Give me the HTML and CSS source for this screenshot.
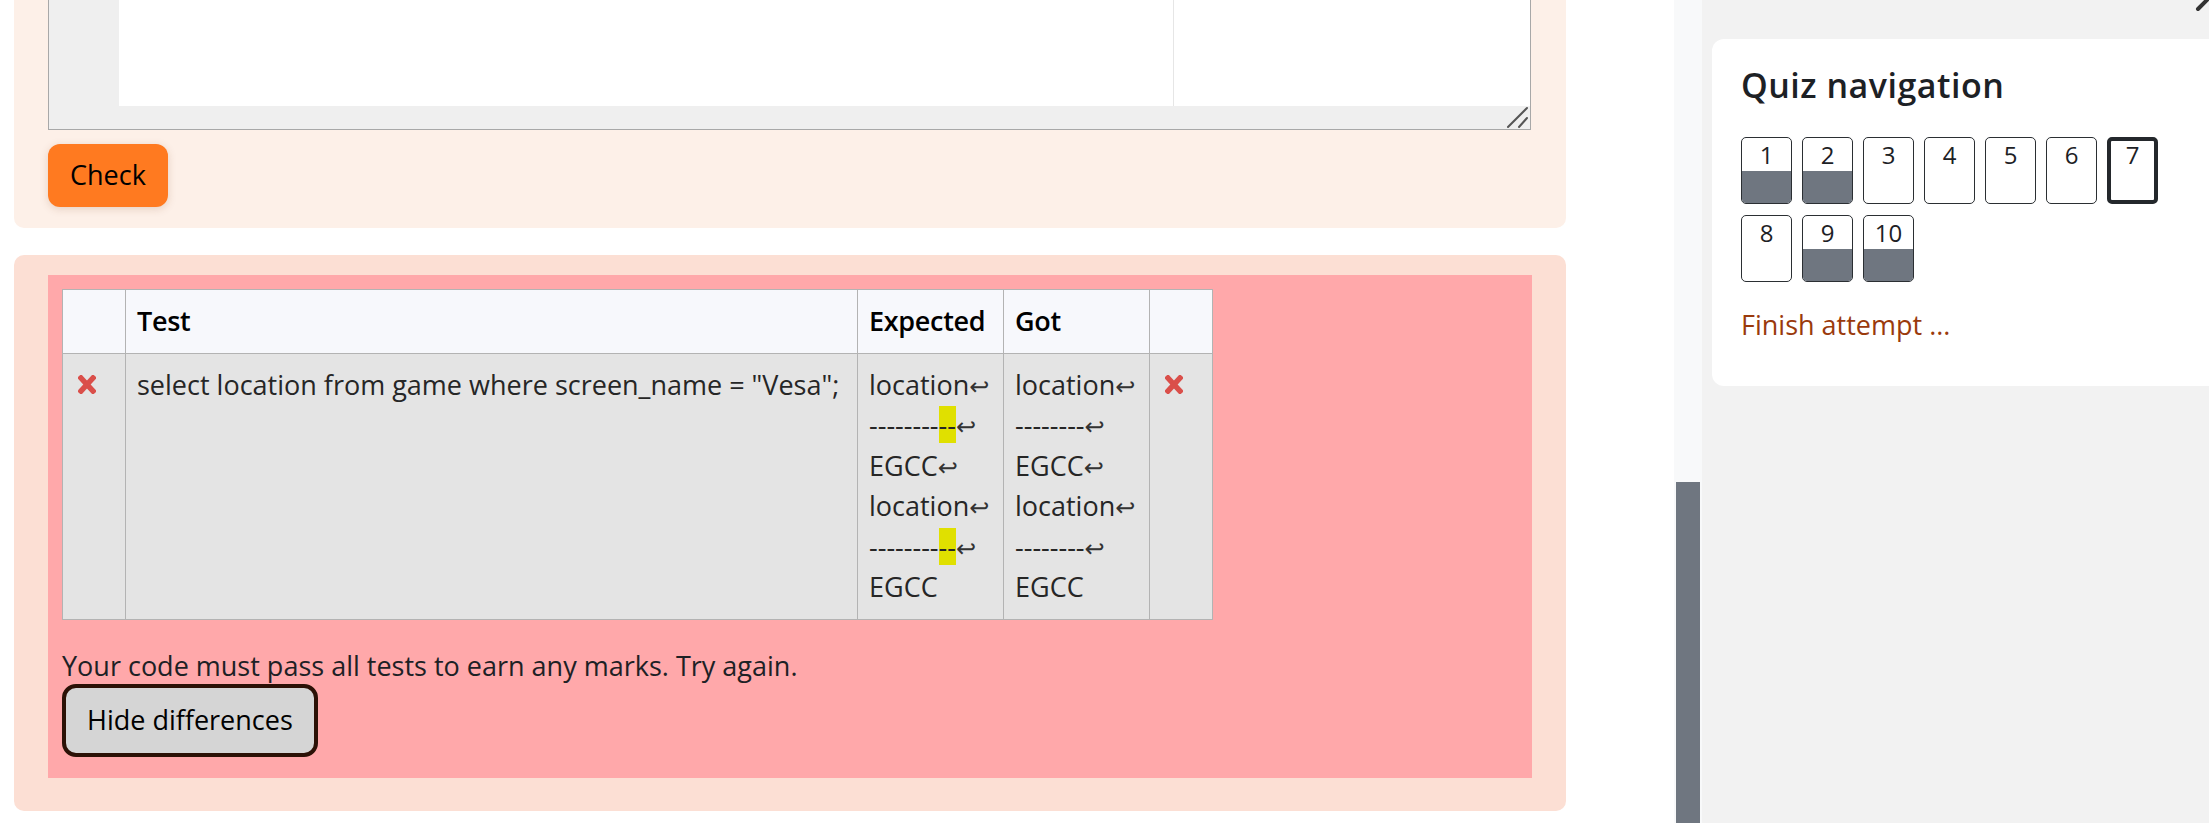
FILE: index.html
```html
<!DOCTYPE html>
<html lang="en">
<head>
<meta charset="utf-8">
<title>Quiz attempt</title>
<link rel="stylesheet" href="styles.css">
</head>
<body>
<div class="page">
  <main class="main">
    <section class="card formulation">
      <div class="editor">
        <div class="editor-body">
          <div class="gutter"></div>
          <div class="code"><div class="print-margin"></div></div>
        </div>
        <div class="editor-bar">
          <svg class="resize" width="24" height="23" viewBox="0 0 24 23" aria-hidden="true">
            <line x1="2" y1="21" x2="21" y2="2" stroke="#555" stroke-width="2" stroke-linecap="round"/>
            <line x1="13" y1="21" x2="21" y2="12" stroke="#555" stroke-width="2" stroke-linecap="round"/>
          </svg>
        </div>
      </div>
      <button class="btn-check" type="button">Check</button>
    </section>

    <section class="card outcome">
      <div class="feedback">
        <table class="results">
          <colgroup>
            <col class="c-icon"><col class="c-test"><col class="c-exp"><col class="c-got"><col class="c-icon">
          </colgroup>
          <thead>
            <tr><th></th><th>Test</th><th>Expected</th><th>Got</th><th></th></tr>
          </thead>
          <tbody>
            <tr>
              <td class="mark"><svg class="cross" width="18" height="19" viewBox="0 0 18 19" aria-hidden="true"><line x1="3" y1="3" x2="15" y2="16"/><line x1="15" y1="3" x2="3" y2="16"/></svg></td>
              <td>select location from game where screen_name = "Vesa";</td>
              <td class="out">location<span class="nl">↩</span><br>--------<span class="hl">--</span><span class="nl">↩</span><br>EGCC<span class="nl">↩</span><br>location<span class="nl">↩</span><br>--------<span class="hl">--</span><span class="nl">↩</span><br>EGCC</td>
              <td class="out">location<span class="nl">↩</span><br>--------<span class="nl">↩</span><br>EGCC<span class="nl">↩</span><br>location<span class="nl">↩</span><br>--------<span class="nl">↩</span><br>EGCC</td>
              <td class="mark"><svg class="cross" width="18" height="19" viewBox="0 0 18 19" aria-hidden="true"><line x1="3" y1="3" x2="15" y2="16"/><line x1="15" y1="3" x2="3" y2="16"/></svg></td>
            </tr>
          </tbody>
        </table>
        <p class="summary">Your code must pass all tests to earn any marks. Try again.</p>
        <button class="btn-diff" type="button">Hide differences</button>
      </div>
    </section>
  </main>

  <div class="scrollbar"><div class="thumb"></div></div>

  <aside class="drawer">
    <svg class="drawer-close" width="14" height="12" viewBox="0 0 14 12" aria-hidden="true">
      <line x1="3" y1="9" x2="15" y2="-3" stroke="#333" stroke-width="4" stroke-linecap="round"/>
    </svg>
    <div class="nav-card">
      <h3 class="nav-title">Quiz navigation</h3>
      <div class="qn-grid">
        <a class="qn answered"><span class="qn-num">1</span><span class="qn-fill"></span></a>
        <a class="qn answered"><span class="qn-num">2</span><span class="qn-fill"></span></a>
        <a class="qn"><span class="qn-num">3</span><span class="qn-fill"></span></a>
        <a class="qn"><span class="qn-num">4</span><span class="qn-fill"></span></a>
        <a class="qn"><span class="qn-num">5</span><span class="qn-fill"></span></a>
        <a class="qn"><span class="qn-num">6</span><span class="qn-fill"></span></a>
        <a class="qn current"><span class="qn-num">7</span><span class="qn-fill"></span></a>
        <a class="qn"><span class="qn-num">8</span><span class="qn-fill"></span></a>
        <a class="qn answered"><span class="qn-num">9</span><span class="qn-fill"></span></a>
        <a class="qn answered"><span class="qn-num">10</span><span class="qn-fill"></span></a>
      </div>
      <a class="finish">Finish attempt ...</a>
    </div>
  </aside>
</div>
</body>
</html>
```

FILE: styles.css
```css
html, body {
  margin: 0;
  padding: 0;
  background: #ffffff;
}

body {
  font-family: "Open Sans", "Noto Sans", "Liberation Sans", sans-serif;
  font-size: 27px;
  line-height: 40.5px;
  color: #1d2125;
}

.page {
  display: flex;
  height: 823px;
  overflow: hidden;
  position: relative;
}

/* ---------- main column ---------- */
.main {
  flex: none;
  width: 1674px;
  box-sizing: border-box;
  padding: 0 108px 0 14px;
}

.card {
  border-radius: 10px;
}

.formulation {
  margin-top: -100px;
  background: #fdf0e8;
  padding: 20px 35px 21px 34px;
}

.editor {
  height: 210px;
  box-sizing: border-box;
  border: 1px solid #a8a8a8;
  display: flex;
  flex-direction: column;
  background: #ffffff;
}

.editor-body {
  height: 185px;
  display: flex;
}

.gutter {
  width: 70px;
  background: #efefef;
}

.code {
  flex: 1;
  position: relative;
  background: #ffffff;
}

.print-margin {
  width: 1055px;
  height: 100%;
  box-sizing: border-box;
  border-right: 1px solid #e6e6e6;
}

.editor-bar {
  height: 23px;
  background: #efefef;
  display: flex;
  justify-content: flex-end;
  align-items: flex-end;
}

.resize {
  display: block;
}

.btn-check {
  margin-top: 14px;
  display: block;
  height: 63px;
  padding: 0 22px;
  border: 0;
  border-radius: 12px;
  background: #ff7a20;
  color: #000;
  font-family: inherit;
  font-size: 27px;
  line-height: 40.5px;
  box-shadow: 0 2px 8px rgba(120, 60, 20, 0.18);
}

.outcome {
  margin-top: 27px;
  background: #fcdfd4;
  padding: 20px 34px 33px 34px;
}

.feedback {
  background: #ffa8aa;
  padding: 14px 14px 21px 14px;
}

/* ---------- results table ---------- */
.results {
  border-collapse: collapse;
  table-layout: fixed;
  width: 1150px;
  background: #e4e4e4;
}

.c-icon { width: 63px; }
.c-test { width: 732px; }
.c-exp { width: 146px; }
.c-got { width: 146px; }

.results th,
.results td {
  border: 1px solid #b3b3b3;
  padding: 11px 11px;
  text-align: left;
  vertical-align: top;
  white-space: nowrap;
}

.results th {
  background: #f7f8fc;
  color: #000;
  font-weight: 600;
  letter-spacing: -0.3px;
}

.results td {
  color: #262626;
}

.results td.mark {
  padding-left: 15px;
}

.cross {
  display: block;
  margin-top: 10px;
  stroke: #da4f4a;
  stroke-width: 5.5px;
  stroke-linecap: square;
}

.nl {
  font-family: "DejaVu Sans", sans-serif;
  font-size: 24px;
  line-height: 0;
  color: #333;
}

.hl {
  background: #e0e000;
}

.summary {
  margin: 26px 0 0;
  color: #1d2125;
}

.btn-diff {
  display: block;
  box-sizing: border-box;
  height: 73px;
  margin-top: -2px;
  padding: 0 21px;
  border: 4px solid #2c1106;
  border-radius: 14px;
  background: #d5d5d5;
  color: #000;
  font-family: inherit;
  font-size: 27px;
  line-height: 40.5px;
}

/* ---------- scrollbar ---------- */
.scrollbar {
  flex: none;
  width: 28px;
  background: #f8f9fa;
  display: flex;
  flex-direction: column;
  justify-content: flex-end;
  padding: 0 2px;
  box-sizing: border-box;
}

.thumb {
  height: 341px;
  background: #6f7680;
}

/* ---------- drawer ---------- */
.drawer {
  flex: 1;
  background: #f2f2f2;
  padding: 39px 0 0 10px;
  position: relative;
}

.drawer-close {
  position: absolute;
  top: 0;
  right: 0;
}

.nav-card {
  background: #ffffff;
  border-radius: 12px;
  margin-right: -20px;
  padding: 26px 29px 41px 29px;
}

.nav-title {
  margin: 0 0 31px;
  font-size: 34px;
  line-height: 40.8px;
  font-weight: 600;
  letter-spacing: 0.5px;
  color: #1d2125;
}

.qn-grid {
  display: grid;
  grid-template-columns: repeat(7, 51px);
  grid-auto-rows: 67px;
  column-gap: 10px;
  row-gap: 11px;
}

.qn {
  box-sizing: border-box;
  border: 1px solid #2b2f33;
  border-radius: 5px;
  overflow: hidden;
  display: flex;
  flex-direction: column;
  background: #ffffff;
}

.qn-num {
  height: 33px;
  flex: none;
  text-align: center;
  font-size: 24px;
  line-height: 33px;
  color: #1d2125;
}

.qn-fill {
  flex: 1;
}

.qn.answered .qn-fill {
  background: #6f7680;
}

.qn.current {
  border: 4px solid #24282c;
}

.qn.current .qn-num {
  height: 30px;
  line-height: 27px;
}

.finish {
  display: block;
  margin-top: 23px;
  color: #9a3a0c;
  font-size: 27px;
  line-height: 40.5px;
}
```
